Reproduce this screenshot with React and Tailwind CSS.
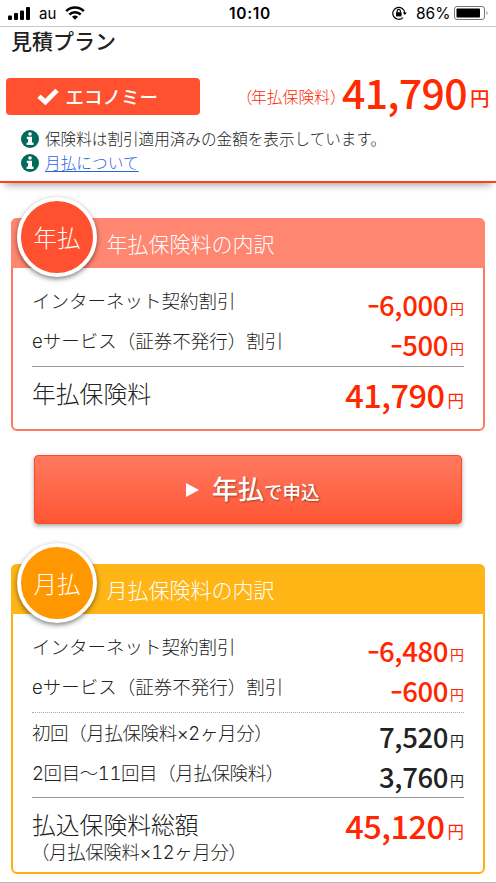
import React from 'react';

const Yen = ({ className }) => <span className={className}>円</span>;

const StatusBar = () => (
    <div className="flex h-[27px] items-center border-b border-[#c8c8c8] pl-2 pr-[7px] font-['Inter',sans-serif] text-black">
        <svg className="h-[13px] w-[22px]" viewBox="0 0 22 13">
            <rect x="0" y="8.5" width="4" height="4.5" rx="1" />
            <rect x="6" y="6" width="4" height="7" rx="1" />
            <rect x="12" y="3.5" width="4" height="9.5" rx="1" />
            <rect x="18" y="0" width="4" height="13" rx="1" />
        </svg>
        <span className="ml-[9px] w-[18px] pt-[2px] text-[15px]">au</span>
        <svg className="ml-[8px] h-[14px] w-[20px]" viewBox="0 0 20 14" fill="none" stroke="#000" strokeWidth="2.5">
            <path d="M1.2 5.2 A12.6 12.6 0 0 1 18.8 5.2" />
            <path d="M4.3 8.5 A8.2 8.2 0 0 1 15.7 8.5" />
            <path d="M7 10.8 A4.5 4.5 0 0 1 13 10.8 L10 13.8 Z" fill="#000" stroke="none" />
        </svg>
        <span className="ml-[144px] w-[44px] whitespace-nowrap pt-[2px] text-[15.5px] font-semibold tracking-[0.7px]">10:10</span>
        <svg className="ml-[119px] h-[14px] w-[15px]" viewBox="0 0 15 14" fill="none" stroke="#000" strokeWidth="1.2">
            <path d="M11 11.6 A6 6 0 1 1 12.8 7" />
            <path d="M10.8 6.4 H14.8 L12.8 9 Z" fill="#000" stroke="none" />
            <rect x="4" y="6.2" width="5.6" height="4.2" fill="#000" stroke="none" />
            <path d="M5.2 6.5 V5 a1.6 1.6 0 0 1 3.2 0 V6.5" />
        </svg>
        <span className="ml-[9px] w-[35px] whitespace-nowrap pt-[2px] text-[15.5px]">86%</span>
        <svg className="ml-[3px] h-[14px] w-[35px]" viewBox="0 0 35 14">
            <rect x="0.5" y="0.5" width="30" height="13" rx="2.5" fill="none" stroke="#777" />
            <rect x="2.5" y="2.5" width="23.5" height="9" rx="0.8" />
            <path d="M32.5 5 q2 2 0 4 z" fill="#777" />
        </svg>
    </div>
);

const InfoIcon = () => (
    <svg className="h-[18px] w-[18px] shrink-0" viewBox="0 0 18 18">
        <circle cx="9" cy="9" r="9" fill="#006a5b" />
        <circle cx="9" cy="4" r="1.8" fill="#fff" />
        <path d="M5.8 6.8 H11 V12.6 H12.5 V14.9 H5.6 V12.6 H7.1 V9 H5.8 Z" fill="#fff" />
    </svg>
);

const Summary = () => (
    <div className="h-[156px] border-b-2 border-[#ff4310] shadow-[0_6px_8px_-5px_rgba(0,0,0,0.45)]">
        <h1 className="pl-[11px] pt-[2px] text-[21px] font-medium leading-[22px] text-[#222]">見積プラン</h1>
        <div className="mt-[27px] flex h-[37px] pl-[5.5px]">
            <div className="flex w-[194px] items-center rounded-[4px] bg-[#ff5030] pl-[31px] text-white">
                <svg className="h-[17px] w-[22px]" viewBox="0 0 22 17" fill="none" stroke="#fff" strokeWidth="4.8">
                    <path d="M2 8.2 L8.4 14 L20 2.4" />
                </svg>
                <span className="ml-[7px] text-[18.5px] font-medium leading-[37px]">エコノミー</span>
            </div>
            <div className="ml-[45px] flex w-[97.5px] whitespace-nowrap text-[15.8px] font-light leading-[37px] text-[#ff2600] [font-feature-settings:'halt']">
                <span className="w-[6.5px]">（</span>年払保険料<span>）</span>
            </div>
            <div className="flex w-[154px] items-baseline whitespace-nowrap text-[#ff2a00]">
                <span className="text-[41px] font-medium leading-[27px] tracking-[-0.7px]">41,790</span>
                <Yen className="ml-[3px] -translate-y-[3px] text-[19.5px] font-medium leading-[20px]" />
            </div>
        </div>
        <div className="mt-[12px] flex h-[24px] items-center pl-[21px]">
            <InfoIcon />
            <span className="ml-[6px] whitespace-nowrap text-[15.6px] font-light text-[#222]">保険料は割引適用済みの金額を表示しています。</span>
        </div>
        <div className="flex h-[24px] items-center pl-[21px]">
            <InfoIcon />
            <a className="ml-[6px] text-[15.7px] font-light text-[#2a62de] underline underline-offset-2">月払について</a>
        </div>
    </div>
);

const PlanCard = ({ badge, title, badgeClass, headClass, borderClass, children }) => (
    <section className={`mx-[11px] rounded-[6px] border-2 ${borderClass}`}>
        <header className={`relative -mx-[2px] -mt-[2px] h-[50px] rounded-t-[6px] pl-[95.5px] text-[21px] font-light leading-[51px] text-white ${headClass}`}>
            <div className={`absolute -top-[21px] left-[6px] h-[80px] w-[80px] rounded-full border-4 border-white text-center text-[23.5px] leading-[72px] shadow-[0_2px_5px_rgba(0,0,0,0.5)] ${badgeClass}`}>
                {badge}
            </div>
            {title}
        </header>
        <div className="mx-[19px]">{children}</div>
    </section>
);

const Row = ({ label, amount, minus, dark, tight }) => (
    <div className="flex h-[40px] justify-between whitespace-nowrap">
        <span className={`font-['Inter','Noto_Sans_CJK_JP',sans-serif] text-[18.5px] font-light leading-[40px] text-[#222] tabular-nums ${tight ? 'tracking-[-0.4px]' : ''}`}>{label}</span>
        <span className={`flex items-baseline font-medium ${dark ? 'text-[#222]' : 'text-[#ff2600]'}`}>
            {minus && <span className="-mr-px inline-block origin-right -translate-y-[2px] scale-x-[1.3] text-[28px] leading-[46px]">-</span>}
            <span className="text-[27.5px] leading-[46px] tracking-[-0.4px]">{amount}</span>
            <Yen className="ml-[2px] -translate-y-[2px] text-[14px] font-normal" />
        </span>
    </div>
);

const Total = ({ label, note, amount }) => (
    <div className="flex justify-between whitespace-nowrap">
        <div className="font-['Inter','Noto_Sans_CJK_JP',sans-serif] font-light text-[#222] tabular-nums">
            <p className="text-[23.8px] leading-[27px]">{label}</p>
            {note && <p className="-ml-px text-[18.4px] leading-[26px] tracking-[-0.3px]">{note}</p>}
        </div>
        <span className="flex items-baseline font-medium text-[#ff2600]">
            <span className="text-[32.5px] leading-[26px] tracking-[-0.5px]">{amount}</span>
            <Yen className="ml-[3px] -translate-y-px text-[16.5px] font-normal leading-[20px]" />
        </span>
    </div>
);

const ApplyButton = () => (
    <button className="mx-[34px] mt-[24px] flex h-[69px] items-center rounded-[4px] border border-[#ff4a26] bg-linear-to-b from-[#ff7860] to-[#ff5632] pl-[151px] text-white shadow-[0_2px_4px_rgba(0,0,0,0.35)] [text-shadow:1px_1px_2px_rgba(0,0,0,0.4)]">
        <svg className="h-[14px] w-[13px]" viewBox="0 0 13 14">
            <path d="M0 0 L13 7 L0 14 Z" fill="#fff" />
        </svg>
        <span className="ml-[13px] pb-[5px] text-[26px] font-medium">年払<span className="text-[18.5px]">で申込</span></span>
    </button>
);

const App = () => (
    <div className="flex h-[883px] w-[496px] flex-col overflow-hidden bg-white font-['Noto_Sans_CJK_JP',sans-serif]">
        <StatusBar />
        <Summary />
        <div className="h-[35px] shrink-0" />
        <PlanCard badge="年払" title="年払保険料の内訳" badgeClass="bg-[#ff5030]" headClass="bg-[#ff8670]" borderClass="border-[#ff7a60]">
            <div className="pt-[13px]">
                <Row label="インターネット契約割引" amount="6,000" minus />
                <Row label="eサービス（証券不発行）割引" amount="500" minus />
            </div>
            <div className="mt-[5px] h-[63px] border-t border-[#999] pt-[14px]">
                <Total label="年払保険料" amount="41,790" />
            </div>
        </PlanCard>
        <ApplyButton />
        <div className="h-[40px] shrink-0" />
        <PlanCard badge="月払" title="月払保険料の内訳" badgeClass="bg-[#ff9800]" headClass="bg-[#ffb515]" borderClass="border-[#ffb010]">
            <div className="pt-[13px]">
                <Row label="インターネット契約割引" amount="6,480" minus />
                <Row label="eサービス（証券不発行）割引" amount="600" minus />
            </div>
            <div className="mt-[5px] border-t border-dotted border-[#aaa]">
                <Row label="初回（月払保険料×2ヶ月分）" amount="7,520" dark tight />
                <Row label="2回目〜11回目（月払保険料）" amount="3,760" dark tight />
            </div>
            <div className="mt-[4px] h-[75px] border-t border-[#999] pt-[14px]">
                <Total label="払込保険料総額" note="（月払保険料×12ヶ月分）" amount="45,120" />
            </div>
        </PlanCard>
        <div className="mt-auto h-px bg-[#bbb]" />
    </div>
);

export default App;
